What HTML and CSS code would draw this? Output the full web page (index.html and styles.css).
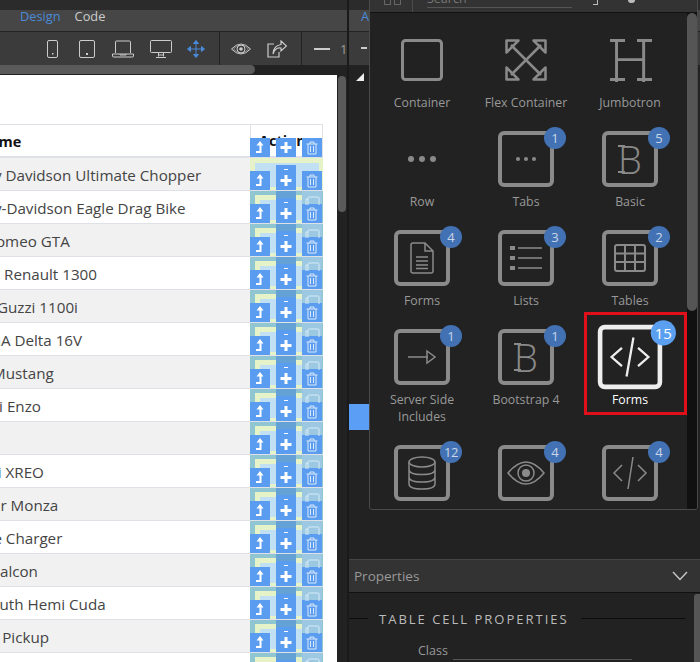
FILE: index.html
```html
<!DOCTYPE html>
<html lang="en">
<head>
    <meta charset="UTF-8">
    <meta name="viewport" content="width=device-width, initial-scale=1.0">
    <title>Insert Panel</title>
    <link rel="stylesheet" href="styles.css">
</head>
<body>

<svg class="defs" width="0" height="0">
    <symbol id="t-up" viewBox="0 0 20 19"><path d="M10 3l3.500 4.500H11.500V15H6v-2h3.500V7.500H6.500z" fill="#fff"/></symbol>
    <symbol id="t-plus" viewBox="0 0 20 19"><path d="M8.500 4h3v4h4v3h-4v4h-3v-4h-4V8h4z" fill="#fff"/></symbol>
    <symbol id="t-plus-dash" viewBox="0 0 20 25"><rect x="8" y="4" width="4" height="1" fill="#fff"/><path d="M8.500 10h3v4h4v3h-4v4h-3v-4h-4v-3h4z" fill="#fff"/></symbol>
    <symbol id="t-trash" viewBox="0 0 20 19"><path d="M4.500 6h11M8 6V4h4v2M6 6v10h8V6M8.500 8v6M11.500 8v6" fill="none" stroke="#dbe9fb" stroke-width="1"/></symbol>
    <symbol id="t-copy" viewBox="0 0 18 9"><path d="M3 9V3h2M5 9V2q0-1 1-1h9q1 0 1 1v7" fill="none" stroke="#d6eaf6" stroke-width="1"/></symbol>
</svg>

<div class="app">
    <!-- design view -->
    <div class="design">
        <div class="top-strip"></div>
        <div class="view-tabs">
            <span class="view-tab active">Design</span>
            <span class="view-tab">Code</span>
        </div>
        <div class="toolbar">
            <svg class="tb-phone" width="11" height="18" viewBox="0 0 11 18"><rect x=".5" y=".5" width="10" height="17" rx="1.500" fill="none" stroke="#ccc"/><rect x="5" y="13" width="1.500" height="1.500" fill="#ccc"/></svg>
            <svg class="tb-tablet" width="16" height="18" viewBox="0 0 16 18"><rect x=".5" y=".5" width="15" height="17" rx="1.500" fill="none" stroke="#ccc"/><rect x="7" y="13" width="2" height="2" fill="#ccc"/></svg>
            <svg width="22" height="18" viewBox="0 0 22 18"><path d="M3.500 13V2q0-1 1-1h13q1 0 1 1v11M.5 14h21v2q0 1-1 1h-19q-1 0-1-1zM8 14v1h6v-1" fill="none" stroke="#ccc"/></svg>
            <svg class="tb-desktop" width="22" height="18" viewBox="0 0 22 18"><path d="M1.500.5h19q1 0 1 1v10q0 1-1 1h-19q-1 0-1-1v-10q0-1 1-1zM8.500 12.500v4M13.500 12.500v4M6 17.500h10M8.500 15h5" fill="none" stroke="#ccc"/></svg>
            <svg width="18" height="18" viewBox="0 0 18 18"><path d="M9 1v16M1 9h16M9 .5L6.500 3.500h5zM9 17.500l-2.500-3h5zM.5 9l3-2.500v5zM17.500 9l-3-2.500v5z" fill="#4a8ad8" stroke="#4a8ad8"/></svg>
            <div class="tb-sep tb-sep-first"></div>
            <svg width="20" height="18" viewBox="0 0 20 18"><path d="M.5 9Q10-1 19.500 9 10 19 .5 9z" fill="none" stroke="#ccc"/><path d="M2.500 9Q10 1 17.500 9 10 17 2.500 9z" fill="none" stroke="#888"/><circle cx="10" cy="9" r="4" fill="none" stroke="#ccc"/><circle cx="10" cy="9" r="1.800" fill="#ccc"/></svg>
            <svg width="20" height="18" viewBox="0 0 20 18"><path d="M14 1l5.500 5-5.500 5V8q-6-1-8 6 0-8 8-9.500zM12 12v5H1V4h6" fill="none" stroke="#ccc" stroke-width="1.200"/></svg>
            <div class="tb-sep tb-sep-second"></div>
            <div class="tb-dash"></div>
            <span class="tb-zoom">1</span>
        </div>
        <div class="hscroll"><div class="hscroll-thumb"></div></div>
        <div class="canvas-wrap">
            <div class="canvas">
                <table class="cars">
                    <thead>
                        <tr>
                            <th>Product Name</th>
                            <th class="action">Action
                                <div class="tools tools-head">
                                    <span class="tool"><svg width="20" height="19"><use href="#t-up"/></svg></span>
                                    <span class="tool"><svg width="20" height="19"><use href="#t-plus"/></svg></span>
                                    <span class="tool"><svg width="20" height="19"><use href="#t-trash"/></svg></span>
                                </div>
                            </th>
                        </tr>
                    </thead>
                    <tbody id="carRows"></tbody>
                </table>
            </div>
            <div class="vscroll"><div class="vscroll-thumb"></div></div>
        </div>
    </div>

    <!-- right side panels -->
    <div class="side">
        <div class="side-strip"></div>
        <div class="side-tabs"><span class="side-tab">A</span></div>
        <div class="side-toolbar"><div class="side-dash"></div></div>
        <div class="side-dark">
            <div class="corner"></div>
            <div class="blue-bar"></div>
        </div>
        <div class="props-bar">
            <span>Properties</span>
            <svg width="16" height="10" viewBox="0 0 16 10"><path d="M1 1l7 7.500L15 1" fill="none" stroke="#ccc" stroke-width="1.300"/></svg>
        </div>
        <div class="props-body">
            <div class="props-content">
                <div class="props-title">
                    <span class="props-line props-line-left"></span>
                    <span class="props-name">TABLE CELL PROPERTIES</span>
                    <span class="props-line props-line-right"></span>
                </div>
                <div class="props-row">
                    <label>Class</label>
                    <div class="props-input"></div>
                </div>
            </div>
            <div class="props-scroll"></div>
        </div>
    </div>
</div>

<!-- insert panel floats over the side panels -->
<div class="insert-panel">
    <div class="insert-head">
        <div class="insert-head-btn"><span></span><span></span></div>
        <div class="insert-search">Search</div>
        <div class="insert-corner"></div>
        <div class="insert-pin"></div>
    </div>
    <div class="insert-body">
        <div class="insert-grid">
            <div class="item">
                <div class="icon"><svg width="42" height="42" viewBox="0 0 42 42"><rect x="1.500" y="1.500" width="39" height="39" rx="3" fill="none" stroke="#8a8a8a" stroke-width="3"/></svg></div>
                <div class="item-label">Container</div>
            </div>
            <div class="item">
                <div class="icon"><svg width="42" height="42" viewBox="0 0 42 42"><g fill="none" stroke="#8a8a8a" stroke-width="2.500" stroke-linejoin="round"><path d="M6 6l30 30M36 6L6 36"/><path d="M1.500 1.500h12L1.500 13.500zM40.500 1.500h-12l12 12zM1.500 40.500h12l-12-12zM40.500 40.500h-12l12-12z"/></g></svg></div>
                <div class="item-label">Flex Container</div>
            </div>
            <div class="item">
                <div class="icon"><span class="glyph glyph-h">H</span></div>
                <div class="item-label">Jumbotron</div>
            </div>

            <div class="item">
                <div class="icon"><svg width="30" height="8" viewBox="0 0 30 8"><circle cx="4" cy="4" r="3" fill="#8a8a8a"/><circle cx="15" cy="4" r="3" fill="#8a8a8a"/><circle cx="26" cy="4" r="3" fill="#8a8a8a"/></svg></div>
                <div class="item-label">Row</div>
            </div>
            <div class="item">
                <div class="icon frame"><svg width="22" height="6" viewBox="0 0 22 6"><circle cx="3" cy="3" r="2" fill="#8a8a8a"/><circle cx="11" cy="3" r="2" fill="#8a8a8a"/><circle cx="19" cy="3" r="2" fill="#8a8a8a"/></svg><span class="badge">1</span></div>
                <div class="item-label">Tabs</div>
            </div>
            <div class="item">
                <div class="icon frame"><span class="glyph glyph-b">B</span><span class="badge">5</span></div>
                <div class="item-label">Basic</div>
            </div>

            <div class="item">
                <div class="icon frame"><svg width="24" height="32" viewBox="0 0 24 32"><path d="M3 1h12l8 8v20q0 2-2 2H3q-2 0-2-2V3q0-2 2-2zM15 1v8h8" fill="none" stroke="#8a8a8a" stroke-width="1.500"/><path d="M6 15h12M6 19h12M6 23h12M6 26.500h12" stroke="#8a8a8a" stroke-width="1.500"/></svg><span class="badge">4</span></div>
                <div class="item-label">Forms</div>
            </div>
            <div class="item">
                <div class="icon frame"><svg width="32" height="26" viewBox="0 0 32 26"><g fill="#8a8a8a"><rect x="0" y="1" width="5" height="4"/><rect x="0" y="11" width="5" height="4"/><rect x="0" y="21" width="5" height="4"/></g><path d="M8 3h24M8 13h24M8 23h24" stroke="#8a8a8a" stroke-width="1.500"/></svg><span class="badge">3</span></div>
                <div class="item-label">Lists</div>
            </div>
            <div class="item">
                <div class="icon frame"><svg width="32" height="28" viewBox="0 0 32 28"><rect x="1" y="1" width="30" height="26" rx="2" fill="none" stroke="#8a8a8a" stroke-width="2"/><path d="M1 9.500h30M1 18h30M11 1v26M21 1v26" stroke="#8a8a8a" stroke-width="2"/></svg><span class="badge">2</span></div>
                <div class="item-label">Tables</div>
            </div>

            <div class="item">
                <div class="icon frame"><svg width="30" height="16" viewBox="0 0 30 16"><path d="M1 8h20M20 2l8 6-8 6z" fill="none" stroke="#8a8a8a" stroke-width="1.500"/></svg><span class="badge">1</span></div>
                <div class="item-label">Server Side<br>Includes</div>
            </div>
            <div class="item">
                <div class="icon frame"><span class="glyph glyph-b">B</span><span class="badge">1</span></div>
                <div class="item-label">Bootstrap 4</div>
            </div>
            <div class="item item-selected">
                <div class="icon frame"><svg width="36" height="36" viewBox="0 0 36 36"><path d="M11 10L2 18l9 8M25 10l9 8-9 8M21 1l-6 34" fill="none" stroke="#8a8a8a" stroke-width="2"/></svg><span class="badge">15</span></div>
                <div class="item-label">Forms</div>
            </div>

            <div class="item">
                <div class="icon frame"><svg width="28" height="34" viewBox="0 0 28 34"><g fill="none" stroke="#8a8a8a" stroke-width="1.500"><ellipse cx="14" cy="6" rx="13" ry="5"/><path d="M1 6v22q0 5 13 5t13-5V6M1 13.500q0 5 13 5t13-5M1 21q0 5 13 5t13-5"/></g></svg><span class="badge badge-wide">12</span></div>
            </div>
            <div class="item">
                <div class="icon frame"><svg width="38" height="24" viewBox="0 0 38 24"><path d="M1 12Q19-10 37 12 19 34 1 12z" fill="none" stroke="#8a8a8a" stroke-width="1.500"/><circle cx="19" cy="12" r="8" fill="none" stroke="#8a8a8a" stroke-width="1.500"/><circle cx="19" cy="12" r="4" fill="#8a8a8a"/></svg><span class="badge">4</span></div>
            </div>
            <div class="item">
                <div class="icon frame"><svg width="36" height="34" viewBox="0 0 36 34"><path d="M10 9L2 17l8 8M26 9l8 8-8 8M21 1l-5 32" fill="none" stroke="#8a8a8a" stroke-width="1.500"/></svg><span class="badge">4</span></div>
            </div>
        </div>
        <div class="insert-scroll"><div class="insert-thumb"></div></div>
    </div>
</div>

<script>
    const cars = [
        '1969 Harley Davidson Ultimate Chopper',
        '2003 Harley-Davidson Eagle Drag Bike',
        '1972 Alfa Romeo GTA',
        '1952 Alpine Renault 1300',
        '1996 Moto Guzzi 1100i',
        '1962 LanciaA Delta 16V',
        '1968 Ford Mustang',
        '2001 Ferrari Enzo',
        '',
        '2002 Suzuki XREO',
        '1969 Corvair Monza',
        '1968 Dodge Charger',
        '1969 Ford Falcon',
        '1970 Plymouth Hemi Cuda',
        '1957 Chevy Pickup',
        ''
    ];

    document.getElementById('carRows').innerHTML = cars.map((car, i) => `
        <tr class="${i === 0 ? 'first' : 'next'}">
            <td>${car}</td>
            <td class="action">
                <div class="sel-margin"><div class="sel-padding"></div></div>
                <div class="tools">
                    <span class="tool"><svg width="20" height="19"><use href="#t-up"/></svg></span>
                    <span class="tool tool-plus"><svg width="20" height="25"><use href="#t-plus-dash"/></svg></span>
                    <span class="tool tool-trash"><svg width="20" height="19"><use href="#t-trash"/></svg></span>
                </div>
                <svg class="copy-peek" width="18" height="9"><use href="#t-copy"/></svg>
            </td>
        </tr>
    `).join('');
</script>

</body>
</html>
```

FILE: styles.css
```css
html, body {
    margin: 0;
    height: 662px;
    overflow: hidden;
    background-color: #222;
}
body {
    font-family: "Open Sans", sans-serif;
    position: relative;
}
.defs {
    position: absolute;
}
.app {
    display: flex;
    height: 662px;
}

/* design view */
.design {
    width: 347px;
    display: flex;
    flex-direction: column;
    flex-shrink: 0;
    border-right: 2px solid #1a1a1a;
}
.top-strip {
    height: 10px;
    background-color: #2b2b2b;
}
.view-tabs {
    height: 22px;
    box-sizing: border-box;
    display: flex;
    gap: 14px;
    padding-left: 20px;
    background-color: #464646;
    border-bottom: 1px solid #222;
    font-size: 12.8px;
    line-height: 13px;
}
.view-tab {
    color: #ccc;
}
.view-tab.active {
    color: #4a8ad8;
}
.toolbar {
    height: 33px;
    box-sizing: border-box;
    display: flex;
    align-items: center;
    gap: 16px;
    padding-left: 47px;
    background-color: #3b3b3b;
    overflow: hidden;
}
.toolbar > * {
    flex-shrink: 0;
}
.tb-phone {
    margin-right: 5px;
}
.tb-tablet {
    margin-right: 1px;
}
.tb-desktop {
    margin-right: -1px;
}
.tb-sep {
    width: 1px;
    height: 33px;
    background-color: #222;
}
.tb-sep-first {
    margin: 0 -5px 0 -2px;
}
.tb-sep-second {
    margin: 0 -4px 0 -2px;
}
.tb-dash {
    width: 16px;
    height: 2px;
    background-color: #ccc;
}
.tb-zoom {
    margin-left: -6px;
    color: #999;
    font-size: 13px;
}
.hscroll {
    height: 10px;
    background-color: #222;
}
.hscroll-thumb {
    width: 255px;
    height: 9px;
    background-color: #5a5a5a;
    border-radius: 0 5px 5px 0;
}
.canvas-wrap {
    flex: 1;
    display: flex;
    min-height: 0;
}
.canvas {
    width: 337px;
    flex-shrink: 0;
    overflow: hidden;
    background-color: #fff;
    padding-top: 49px;
}
.vscroll {
    flex: 1;
    background-color: #222;
    padding: 1px 1px 0;
}
.vscroll-thumb {
    height: 136px;
    background-color: #5a5a5a;
    border-radius: 4px;
}

/* table */
.cars {
    width: 418px;
    margin-left: -95px;
    table-layout: fixed;
    border-collapse: separate;
    border-spacing: 0;
    font-size: 15.2px;
    color: #444;
}
.cars th {
    height: 34px;
    box-sizing: border-box;
    padding: 1px 12px 0;
    text-align: left;
    color: #111;
    font-size: 14.5px;
    border-top: 1px solid #dee2e6;
    border-bottom: 2px solid #dee2e6;
}
.cars td {
    height: 33px;
    box-sizing: border-box;
    padding: 1px 12px 0;
    white-space: nowrap;
    border-bottom: 1px solid #dee2e6;
}
.cars tbody tr:nth-child(odd) td {
    background-color: #f1f1f1;
}
.cars th.action,
.cars td.action {
    width: 73px;
    padding: 0 8px;
    position: relative;
    overflow: hidden;
}
.cars th.action {
    overflow: visible;
    border-left: 1px solid #dee2e6;
    border-right: 1px solid #dee2e6;
}
.cars tbody tr.next td.action {
    background-color: #8fc6d2;
}
.cars tbody tr.first td.action {
    background-color: #e6f2c8;
}
.sel-margin {
    position: absolute;
    top: 4px;
    left: 5px;
    right: 4px;
    bottom: 0;
    background-color: #e6f2c8;
}
.first .sel-margin {
    top: 0;
    left: 0;
    right: 0;
}
.sel-padding {
    position: absolute;
    top: 5px;
    left: 5px;
    right: 0;
    bottom: 3px;
    background-color: #c2e0f3;
}
.first .sel-padding {
    left: 5px;
    right: 4px;
}
.copy-peek {
    position: absolute;
    top: 5px;
    left: 53px;
}
.first .copy-peek {
    display: none;
}
.tools {
    position: absolute;
    left: 0;
    bottom: 0;
    display: flex;
    align-items: flex-end;
    gap: 6px;
}
.tools-head {
    bottom: -1px;
    left: -1px;
}
.tool {
    width: 20px;
    display: block;
    background-color: #5a9cf0;
}
.tool svg {
    display: block;
}
.next .tool-plus {
    box-shadow: 0 -7px 0 #64a2d6;
}
.next .tool-trash {
    box-shadow: 0 -13px 0 #9cc8e2;
}

/* side panels */
.side {
    flex: 1;
    display: flex;
    flex-direction: column;
    min-width: 0;
}
.side-strip {
    height: 10px;
    background-color: #2b2b2b;
}
.side-tabs {
    height: 22px;
    box-sizing: border-box;
    padding-left: 12px;
    background-color: #464646;
    border-bottom: 1px solid #222;
    font-size: 12.8px;
    line-height: 13px;
    color: #4a8ad8;
}
.side-toolbar {
    height: 33px;
    box-sizing: border-box;
    padding: 15px 0 0;
    background-color: #3b3b3b;
}
.side-dash {
    width: 6px;
    height: 2px;
    margin-left: 12px;
    background-color: #ccc;
}
.side-dark {
    height: 494px;
    background-color: #222;
}
.corner {
    width: 0;
    height: 0;
    margin: 8px 0 0 7px;
    border-left: 8px solid transparent;
    border-bottom: 8px solid #eee;
}
.blue-bar {
    width: 20px;
    height: 26px;
    margin-top: 323px;
    background-color: #5a9ff5;
}
.props-bar {
    height: 34px;
    box-sizing: border-box;
    display: flex;
    align-items: center;
    justify-content: space-between;
    padding: 0 12px 0 5px;
    background-color: #333;
    border-top: 1px solid #444;
    border-bottom: 1px solid #111;
    color: #999;
    font-size: 13.5px;
}
.props-body {
    flex: 1;
    display: flex;
    min-height: 0;
}
.props-content {
    flex: 1;
    overflow: hidden;
}
.props-title {
    display: flex;
    align-items: center;
    margin-top: 17px;
    height: 17px;
}
.props-line {
    height: 1px;
    background-color: #0c0c0c;
}
.props-line-left {
    width: 19px;
}
.props-line-right {
    width: 104px;
}
.props-name {
    margin: 0 12px 0 11px;
    color: #bbb;
    font-size: 13px;
    letter-spacing: 2px;
    white-space: nowrap;
}
.props-row {
    display: flex;
    margin-top: 15px;
    padding-left: 69px;
    color: #999;
    font-size: 12.5px;
}
.props-input {
    width: 179px;
    height: 17px;
    margin-left: 5px;
    border-bottom: 1px solid #555;
}
.props-scroll {
    width: 6px;
    background-color: #555;
    border-radius: 3px 0 0 0;
    margin-top: 1px;
}

/* insert panel */
.insert-panel {
    position: absolute;
    top: -20px;
    left: 369px;
    width: 327px;
    height: 528px;
    overflow: hidden;
    background-color: #222;
    border: 1px solid #4a4a4a;
    border-radius: 3px;
}
.insert-head {
    height: 32px;
    box-sizing: border-box;
    display: flex;
    position: relative;
    background-color: #333;
    border-bottom: 1px solid #111;
}
.insert-head-btn {
    width: 43px;
    display: flex;
    gap: 3px;
    padding: 16px 0 0 14px;
    box-sizing: border-box;
    border-right: 1px solid #4a4a4a;
}
.insert-head-btn span {
    width: 5px;
    height: 6px;
    border: 1px solid #666;
}
.insert-search {
    width: 145px;
    height: 27px;
    margin-left: 14px;
    padding-top: 9px;
    box-sizing: border-box;
    border-bottom: 1px solid #555;
    color: #777;
    font-size: 12.5px;
}
.insert-corner {
    position: absolute;
    top: 18px;
    left: 223px;
    width: 4px;
    height: 5px;
    border-right: 1px solid #bbb;
    border-bottom: 1px solid #bbb;
}
.insert-pin {
    position: absolute;
    top: 19px;
    left: 258px;
    width: 7px;
    height: 3px;
    border-radius: 0 0 4px 4px;
    background-color: #bbb;
}
.insert-body {
    display: flex;
    height: 496px;
}
.insert-grid {
    width: 318px;
    display: grid;
    grid-template-columns: repeat(3, 104px);
    row-gap: 20px;
    align-content: start;
    padding-top: 19px;
    box-sizing: border-box;
}
.insert-scroll {
    width: 10px;
    background-color: #111;
}
.insert-thumb {
    height: 298px;
    background-color: #555;
    border-radius: 5px;
}
.item {
    display: flex;
    flex-direction: column;
    align-items: center;
    position: relative;
}
.icon {
    width: 56px;
    height: 56px;
    box-sizing: border-box;
    display: flex;
    align-items: center;
    justify-content: center;
    position: relative;
}
.icon.frame {
    border: 4px solid #8a8a8a;
    border-radius: 6px;
}
.item-label {
    margin-top: 6px;
    line-height: 17px;
    text-align: center;
    color: #999;
    font-size: 12.3px;
}

/* letter icons: thin real glyph plus slab bars */
.glyph {
    position: relative;
    font-weight: 300;
    color: #8a8a8a;
}
.glyph-h {
    height: 42px;
    font-size: 58px;
    line-height: 42px;
}
.glyph-h::before,
.glyph-h::after {
    content: "";
    position: absolute;
    left: 1px;
    width: 42px;
    height: 3px;
    background: linear-gradient(to right, #8a8a8a 15px, transparent 15px, transparent 27px, #8a8a8a 27px);
}
.glyph-h::before {
    top: 0;
}
.glyph-h::after {
    bottom: 0;
}
.glyph-b {
    font-size: 38px;
    line-height: 38px;
}
.glyph-b::before,
.glyph-b::after {
    content: "";
    position: absolute;
    left: 0;
    width: 7px;
    height: 2px;
    background-color: #8a8a8a;
}
.glyph-b::before {
    top: 5px;
}
.glyph-b::after {
    top: 31px;
}
.badge {
    position: absolute;
    top: -8px;
    right: -16px;
    width: 22px;
    height: 22px;
    border-radius: 50%;
    background-color: #4272b4;
    color: #c9d6e8;
    font-size: 13px;
    line-height: 22px;
    text-align: center;
}
.badge-wide {
    letter-spacing: -0.5px;
}

/* selected block */
.item-selected::after {
    content: "";
    position: absolute;
    top: -17px;
    left: 6px;
    width: 97px;
    height: 97px;
    border: 3px solid #e0101a;
}
.item-selected .icon {
    transform: scale(1.15);
    border-color: #eee;
}
.item-selected svg path {
    stroke: #eee;
}
.item-selected .badge {
    background-color: #5a9ff0;
    color: #fff;
}
.item-selected .item-label {
    color: #fff;
}
```
